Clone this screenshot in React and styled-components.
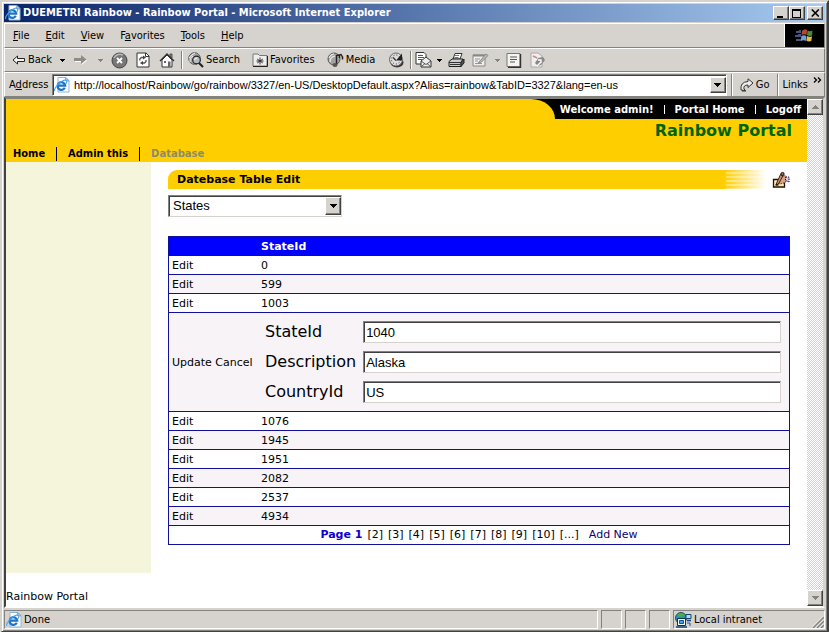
import React, { useState } from 'react';
import styled, { createGlobalStyle } from 'styled-components';

const uiFont = '"DejaVu Sans Condensed", "Liberation Sans", sans-serif';
const pageFont = '"DejaVu Sans", sans-serif';
const fieldFont = '"Liberation Sans", Arial, sans-serif';
const face = '#d6d3ce';
const shade = '#84827c';
const dark = '#424142';
const gold = '#ffce00';
const line = '#10109c';

const GlobalStyle = createGlobalStyle`
  *, *::before, *::after { box-sizing: border-box; }
  body { margin: 0; background: ${face}; }
  button, input, select { margin: 0; border-radius: 0; outline: none; }
`;

const Window = styled.div`
  display: flex;
  flex-direction: column;
  min-height: 100vh;
  padding: 2px;
  background: ${face};
  border: 2px solid;
  border-color: ${face} ${dark} ${dark} ${face};
  box-shadow: inset 1px 1px #fff, inset -1px -1px ${shade};
  color: #000;
  font: 11px/14px ${uiFont};
`;

const TitleBar = styled.header`
  display: flex;
  align-items: center;
  gap: 2px;
  height: 18px;
  padding: 0 2px 0 1px;
  background: linear-gradient(to right, #0a246a, #a6caf0);
  color: #fff;
`;

const WindowTitle = styled.h1`
  flex: 1;
  margin: 0;
  font: bold 11px/16px ${uiFont};
  white-space: nowrap;
`;

const CaptionButtons = styled.div`
  display: flex;
`;

const RaisedButton = styled.button`
  display: flex;
  align-items: center;
  justify-content: center;
  flex: none;
  width: 16px;
  height: ${(p) => (p.$tall ? 16 : 14)}px;
  margin-left: ${(p) => (p.$apart ? 2 : 0)}px;
  padding: 0;
  border: 1px solid;
  border-color: #fff ${dark} ${dark} #fff;
  box-shadow: inset -1px -1px ${shade};
  background: ${face};
`;

const Bar = styled.div`
  display: flex;
  align-items: center;
  height: ${(p) => p.$height}px;
  margin-top: ${(p) => (p.$first ? 1 : 0)}px;
  padding-left: ${(p) => p.$indent}px;
  border: 1px solid;
  border-color: #fff ${shade} ${shade} #fff;
`;

const MenuItem = styled.button`
  padding: 0 8px;
  border: 0;
  background: none;
  color: #000;
  font: 11px/18px ${uiFont};
`;

const Mnemonic = styled.span`
  text-decoration: underline;
`;

const Throbber = styled.div`
  display: flex;
  align-items: center;
  justify-content: center;
  width: 40px;
  height: 23px;
  margin-left: auto;
  border-left: 1px solid #fff;
  background: #000;
`;

const ToolGroup = styled.div`
  display: flex;
  align-items: center;
  gap: ${(p) => (p.$gap ? 6 : 0)}px;
`;

const ToolButton = styled.button`
  display: flex;
  align-items: center;
  justify-content: center;
  gap: 2px;
  height: 20px;
  min-width: ${(p) => (p.$labelled ? 0 : p.$tight ? 20 : 24)}px;
  padding: 0 ${(p) => (p.$labelled ? 3 : 0)}px;
  border: 0;
  background: none;
  color: #000;
  font: 11px/16px ${uiFont};
`;

const DropButton = styled(ToolButton)`
  min-width: ${(p) => (p.$tight ? 10 : 14)}px;
`;

const Separator = styled.span`
  width: 2px;
  height: ${(p) => (p.$full ? 22 : 18)}px;
  margin: 0 ${(p) => (p.$full ? 4 : 2)}px;
  border-left: 1px solid ${shade};
  border-right: 1px solid #fff;
`;

const AddressLabel = styled.label`
  width: 43px;
`;

const AddressBox = styled.div`
  display: flex;
  flex: 1;
  align-items: center;
  height: 22px;
  padding: 1px 0 1px 1px;
  border: 1px solid;
  border-color: ${shade} #fff #fff ${shade};
  box-shadow: inset 1px 1px ${dark};
  background: #fff;
`;

const AddressInput = styled.input`
  flex: 1;
  min-width: 0;
  padding: 0 4px;
  border: 0;
  background: none;
  color: #000;
  font: 11px/16px ${fieldFont};
`;

const BoxIcon = styled.span`
  display: flex;
`;

const Chevron = styled.button`
  align-self: flex-start;
  margin-left: 3px;
  padding: 4px 2px 0;
  border: 0;
  background: none;
  line-height: 0;
`;

const Viewport = styled.div`
  display: flex;
  flex: 1;
  border: 2px solid;
  border-color: ${shade} ${face} #fff ${dark};
  background: #fff;
`;

const Page = styled.div`
  flex: 1;
  min-width: 0;
  font: 11px/14px ${pageFont};
`;

const ScrollTrack = styled.div`
  display: flex;
  flex-direction: column;
  justify-content: space-between;
  width: 16px;
  background: repeating-conic-gradient(${face} 0 25%, #fff 0 50%) 0 0 / 2px 2px;
`;

const PortalHeader = styled.div`
  display: flex;
  flex-direction: column;
  background: ${gold};
`;

const UserBar = styled.nav`
  display: flex;
  align-items: center;
  align-self: flex-end;
  gap: 10px;
  height: 20px;
  padding: 1px 6px 0 0;
  background: #000;
  color: #fff;
  font: bold 10px/14px ${pageFont};
`;

const Curve = styled.span`
  width: 24px;
  height: 20px;
  margin: -1px -5px 0 0;
  border-top-right-radius: 24px 20px;
  background: ${gold};
`;

const Divider = styled.span`
  width: 1px;
  height: ${(p) => (p.$tall ? 14 : 9)}px;
  background: currentColor;
`;

const PlainLink = styled.a`
  color: inherit;
  text-decoration: none;
`;

const PortalName = styled.h2`
  margin: 0;
  padding: 2px 15px 0 0;
  color: #006500;
  font: bold 16px/20px ${pageFont};
  text-align: right;
`;

const Tabs = styled.nav`
  display: flex;
  align-items: center;
  gap: 11px;
  height: 21px;
  padding: 4px 7px 0;
  font: bold 11px/14px ${uiFont};
`;

const CurrentTab = styled.span`
  color: #8c8a6b;
  font: bold 10px/14px ${pageFont};
`;

const Columns = styled.div`
  display: flex;
`;

const LeftPane = styled.aside`
  flex: none;
  width: 145px;
  background: #f5f5dc;
`;

const Content = styled.main`
  flex: 1;
  min-width: 0;
  padding: 8px 17px 28px;
`;

const ModuleHead = styled.div`
  display: flex;
  align-items: center;
  gap: 6px;
`;

const ModuleTitle = styled.h3`
  flex: 1;
  margin: 0;
  padding: 2px 9px;
  border-top-left-radius: 9px;
  background:
    repeating-linear-gradient(to bottom, transparent 0 2px, rgba(255, 255, 255, 0.35) 2px 4px) right / 40px 100% no-repeat,
    linear-gradient(to right, ${gold} calc(100% - 42px), #fff);
  font: bold 11px/15px ${pageFont};
`;

const IconLink = styled.a`
  display: flex;
`;

const SelectBox = styled.div`
  position: relative;
  width: 174px;
  height: 22px;
  margin: 6px 0 19px;
  border: 1px solid;
  border-color: ${shade} ${face} ${face} ${shade};
  box-shadow: inset 1px 1px ${dark};
`;

const TableSelect = styled.select`
  appearance: none;
  width: 100%;
  height: 20px;
  padding: 0 20px 0 4px;
  border: 0;
  background: none;
  color: #000;
  font: 13px/18px ${fieldFont};
`;

const SelectArrow = styled.span`
  position: absolute;
  top: 1px;
  right: 0;
  display: flex;
  align-items: center;
  justify-content: center;
  width: 16px;
  height: 18px;
  border: 1px solid;
  border-color: #fff ${dark} ${dark} #fff;
  box-shadow: inset -1px -1px ${shade};
  background: ${face};
  pointer-events: none;
`;

const Grid = styled.table`
  width: 100%;
  border: 1px solid ${line};
  border-spacing: 0;
  table-layout: fixed;
`;

const HeadCell = styled.th`
  width: ${(p) => (p.$narrow ? '89px' : 'auto')};
  height: 19px;
  padding: 0 3px;
  background: #00f;
  color: #fff;
  font: bold 11px/14px ${pageFont};
  text-align: left;
`;

const Row = styled.tr`
  background: ${(p) => (p.$shaded ? '#f7f3f7' : '#fff')};
`;

const Cell = styled.td`
  height: 19px;
  padding: 1px 3px 0;
  border-bottom: 1px solid ${line};
  white-space: nowrap;
`;

const FormCell = styled(Cell)`
  padding: 8px 8px 8px 7px;
`;

const Fields = styled.div`
  display: grid;
  grid-template-columns: auto 1fr;
  gap: 8px 7px;
`;

const FieldLabel = styled.label`
  font: 16px/22px ${pageFont};
`;

const FieldInput = styled.input`
  min-width: 0;
  height: 22px;
  padding: 0 2px;
  border: 1px solid;
  border-color: ${shade} ${face} ${face} ${shade};
  box-shadow: inset 1px 1px ${dark};
  background: #fff;
  color: #000;
  font: 13px/18px ${fieldFont};
`;

const PagerCell = styled.td`
  height: 18px;
  padding: 0;
`;

const Pager = styled.div`
  display: flex;
  justify-content: center;
  gap: 5px;
`;

const CurrentPage = styled.b`
  color: #1000ce;
`;

const AddLink = styled.a`
  margin-left: 5px;
  color: #10006b;
  text-decoration: none;
`;

const PortalFooter = styled.footer`
  padding: 17px 0 2px;
`;

const StatusBar = styled.footer`
  display: flex;
  gap: 3px;
  height: 21px;
  padding-top: 2px;
`;

const StatusPanel = styled.div`
  display: flex;
  align-items: center;
  gap: 2px;
  flex: ${(p) => (p.$grow ? '1' : 'none')};
  width: ${(p) => p.$width || 21}px;
  padding-left: 1px;
  border: 1px solid;
  border-color: ${shade} #fff #fff ${shade};
`;

const Grip = styled.span`
  align-self: flex-end;
  display: flex;
  margin-left: auto;
`;

const BrowserIcon = () => (
  <svg width="16" height="16" viewBox="0 0 16 16" aria-hidden="true">
    <path d="M4 .5h8l3 3v11.500H4z" fill="#fff" stroke="#8eb4dc" />
    <path d="M11.500.5v3.500H15z" fill="#b8d0ea" stroke="#6b8cbc" strokeWidth=".6" />
    <path d="M10.800 10.800A3.800 3.800 0 1 1 11.200 8.600H4.500" fill="none" stroke="#1e72c8" strokeWidth="2.200" />
    <path d="M1 14C-1 12 6 4 11 3c3-.4 1.700 3 .7 4" fill="none" stroke="#49a7e8" strokeWidth="1.100" />
  </svg>
);

const FlagIcon = () => (
  <svg width="20" height="18" viewBox="0 0 20 18" aria-hidden="true">
    <path d="M1 4h3v2H1zM0 8h4v2H0zM1 12h3v2H1zM4 3h2v3H4zM3 7h3v3H3zM4 12h2v2H4z" fill="#47567a" />
    <path d="M7 4q3-3 5-1l-.5 5q-2-1.500-5 0z" fill="#bb4a2b" />
    <path d="M12.500 3.500q2 1.500 5 0L17 8.500q-3 1-5-.5z" fill="#458c3d" />
    <path d="M6.300 9q3-1.500 5 0l-.5 5q-2-1.500-5 0z" fill="#6e9fe0" />
    <path d="M12 9q2 1.500 5 .3l-.7 4.700q-3 1-5-.5z" fill="#dfc140" />
  </svg>
);

const Caret = ({ color = '#000' }) => (
  <svg width="7" height="4" viewBox="0 0 7 4" shapeRendering="crispEdges" aria-hidden="true">
    <path d="M0 0h7v1H0zM1 1h5v1H1zM2 2h3v1H2zM3 3h1v1H3z" fill={color} />
  </svg>
);

const SmallCaret = ({ color = '#000' }) => (
  <svg width="5" height="3" viewBox="0 0 5 3" shapeRendering="crispEdges" aria-hidden="true">
    <path d="M0 0h5v1H0zM1 1h3v1H1zM2 2h1v1H2z" fill={color} />
  </svg>
);

const UpArrow = () => (
  <svg width="7" height="4" viewBox="0 0 7 4" shapeRendering="crispEdges" aria-hidden="true">
    <path d="M3 0h1v1H3zM2 1h3v1H2zM1 2h5v1H1zM0 3h7v1H0z" fill={shade} />
  </svg>
);

const MinimizeIcon = () => (
  <svg width="10" height="9" viewBox="0 0 10 9" shapeRendering="crispEdges" aria-hidden="true">
    <path d="M1 7h6v2H1z" />
  </svg>
);

const MaximizeIcon = () => (
  <svg width="10" height="9" viewBox="0 0 10 9" shapeRendering="crispEdges" aria-hidden="true">
    <path d="M0 0h9v9H0zM1 2v6h7V2z" fillRule="evenodd" />
  </svg>
);

const CloseIcon = () => (
  <svg width="9" height="8" viewBox="0 0 9 8" aria-hidden="true">
    <path d="M.8.5l7 7M7.800.5l-7 7" stroke="#000" strokeWidth="1.600" />
  </svg>
);

const BackIcon = () => (
  <svg width="14" height="12" viewBox="0 0 14 12" aria-hidden="true">
    <path d="M1 6l4.500-4v2.500h7v3h-7V10z" fill="#f4f4f0" stroke="#222" />
  </svg>
);

const ForwardIcon = () => (
  <svg width="14" height="12" viewBox="0 0 14 12" aria-hidden="true">
    <path d="M1 5h6.500V2L13 6.500 7.500 11V8H1z" fill="#fff" />
    <path d="M0 4h7V1l5.500 4.500L7 10V7H0z" fill="#8d8b87" />
  </svg>
);

const StopIcon = () => (
  <svg width="17" height="17" viewBox="0 0 17 17" aria-hidden="true">
    <circle cx="8.500" cy="8.500" r="7.500" fill="#777" stroke="#444" />
    <path d="M3 6a6.500 6.500 0 0 1 9-3" fill="none" stroke="#bbb" strokeWidth="1.500" />
    <path d="M6 6l5 5M11 6l-5 5" stroke="#fff" strokeWidth="1.800" />
  </svg>
);

const RefreshIcon = () => (
  <svg width="14" height="16" viewBox="0 0 14 16" aria-hidden="true">
    <path d="M1 1h9l3 3v11H1z" fill="#fff" stroke="#333" />
    <path d="M9.500 1v3.500H13" fill="none" stroke="#333" />
    <path d="M3.800 8.500V7l1.500-1.500H8M10 8v1.500L8.500 11H6" fill="none" stroke="#555" strokeWidth="1.300" />
    <path d="M7 3.500l3 2-3 2zM7 9l-3 2 3 2z" fill="#444" />
  </svg>
);

const HomeIcon = () => (
  <svg width="16" height="16" viewBox="0 0 16 16" aria-hidden="true">
    <path d="M11 2h2v4h-2z" fill="#999" stroke="#333" strokeWidth=".8" />
    <path d="M3 8v7h10V8L8 3z" fill="#fff" stroke="#333" />
    <path d="M1 9l7-7 7 7" fill="none" stroke="#333" strokeWidth="1.400" />
    <path d="M9 9.500h2.500V15H9zM5 9h2v2H5z" fill="#666" />
  </svg>
);

const SearchIcon = () => (
  <svg width="16" height="16" viewBox="0 0 16 16" aria-hidden="true">
    <circle cx="6.500" cy="6.500" r="5.800" fill="#aaa" stroke="#555" />
    <path d="M1 6q3-4 6-5M2 10q-1-4 3-6" fill="none" stroke="#eee" />
    <circle cx="8.500" cy="8" r="3.800" fill="#b5bcc0" stroke="#222" strokeWidth="1.200" />
    <path d="M6.500 8q.5-2 2.500-2" fill="none" stroke="#fff" />
    <path d="M11 11l4 4" stroke="#222" strokeWidth="2.200" />
  </svg>
);

const FavoritesIcon = () => (
  <svg width="16" height="14" viewBox="0 0 16 14" aria-hidden="true">
    <path d="M1 2.500V1h5l1.500 1.500H15V13H1z" fill="#eee" stroke="#777" />
    <path d="M15.500 3v10.500H1" fill="none" stroke="#222" />
    <path d="M8 4.500v7M5.200 6l5.600 4M10.800 6L5.200 10M4.500 8h7" stroke="#333" />
  </svg>
);

const MediaIcon = () => (
  <svg width="17" height="16" viewBox="0 0 17 16" aria-hidden="true">
    <circle cx="7" cy="7" r="6" fill="#a3a3a0" stroke="#555" />
    <path d="M2 6q2-4 5-4M3 10q0-5 5-6" fill="none" stroke="#eee" strokeWidth="1.200" />
    <path d="M9.500 13V3.500L14 2.500q2 2 1.500 5M12.500 3v3" fill="none" stroke="#222" strokeWidth="1.400" />
    <ellipse cx="8" cy="13" rx="2.500" ry="2" fill="#555" />
  </svg>
);

const HistoryIcon = () => (
  <svg width="17" height="16" viewBox="0 0 17 16" aria-hidden="true">
    <ellipse cx="9" cy="10.500" rx="6.500" ry="5" fill="#333" />
    <circle cx="8" cy="7.500" r="6.500" fill="#ddd" stroke="#666" />
    <circle cx="8" cy="7.500" r="4.500" fill="none" stroke="#333" strokeDasharray="1 2" />
    <path d="M8 8.500l6-7v7z" fill="#222" />
    <path d="M5 5.500l3 3" stroke="#333" strokeWidth="1.300" />
  </svg>
);

const MailIcon = () => (
  <svg width="18" height="16" viewBox="0 0 18 16" aria-hidden="true">
    <path d="M1 .5h8l2 2V12H1z" fill="#fff" stroke="#333" />
    <path d="M3 3.500h5M3 5.500h6M3 7.500h4" stroke="#555" />
    <path d="M6 9l5-4 5 4v6H6z" fill="#eee" stroke="#333" />
    <path d="M6 9l5 3.500L16 9M6 15l4-3.500M16 15l-4-3.500" fill="none" stroke="#555" />
  </svg>
);

const PrintIcon = () => (
  <svg width="17" height="15" viewBox="0 0 17 15" aria-hidden="true">
    <path d="M5 6l2-5.500h7L12 6z" fill="#fff" stroke="#333" />
    <path d="M7 2.500h4M6.500 4.500h4" stroke="#777" />
    <path d="M1 8.500L4 6h11l-2 3v4.500H1z" fill="#ccc" stroke="#222" />
    <path d="M13 9.500L16 6v4l-3 3.500z" fill="#555" stroke="#222" />
    <path d="M1 9.500h12M2 11.500h10" stroke="#333" />
  </svg>
);

const EditPageIcon = () => (
  <svg width="17" height="14" viewBox="0 0 17 14" aria-hidden="true">
    <path d="M1 2h12v11H1z" fill="#eee" stroke="#8a8884" />
    <path d="M1 2.500h12" stroke="#8a8884" strokeWidth="2" />
    <path d="M3 6h5M3 8h3M3 10.500h7" stroke="#999" />
    <path d="M7 9l7-8 2 1.500-7 7L6 10.500z" fill="#bbb" stroke="#8a8884" />
  </svg>
);

const DiscussIcon = () => (
  <svg width="16" height="15" viewBox="0 0 16 15" aria-hidden="true">
    <path d="M1 .5h13v13H1z" fill="#f4f4f0" stroke="#777" />
    <path d="M14.500 1v13.500H2" fill="none" stroke="#333" strokeWidth="1.400" />
    <path d="M4 4h7M4 6.500h7M4 9h5" stroke="#555" />
  </svg>
);

const ResearchIcon = () => (
  <svg width="16" height="16" viewBox="0 0 16 16" aria-hidden="true">
    <path d="M1 1h7l4 3v11H1z" fill="#eee" stroke="#aaa" />
    <path d="M5 11l3-5 5-1 2 3-4 5-3 1z" fill="#888" />
    <path d="M4 5l3 3M8 8h3v3M11 10l-4 4" stroke="#fff" strokeWidth="1.400" fill="none" />
    <path d="M3 4l4 2" stroke="#c88" strokeWidth="1.500" />
  </svg>
);

const GoIcon = () => (
  <svg width="14" height="14" viewBox="0 0 14 14" aria-hidden="true">
    <path d="M1 12q-1-8 7-8.500V.8L13 5 8 9.500V7Q3 7 4 11l1.500 1.500z" fill="#eee" stroke="#333" />
    <path d="M2 13h4" stroke="#333" />
  </svg>
);

const MoreIcon = () => (
  <svg width="9" height="6" viewBox="0 0 9 6" aria-hidden="true">
    <path d="M1 .5L3.500 3 1 5.500M5 .5L7.500 3 5 5.500" fill="none" stroke="#000" strokeWidth="1.300" />
  </svg>
);

const PencilIcon = () => (
  <svg width="18" height="18" viewBox="0 0 18 18" aria-hidden="true">
    <path d="M1.500 8.500h11v7.500h-11z" fill="#ffefad" stroke="#211000" strokeWidth="1.300" />
    <path d="M8 7l5-2.500 2 2v3L12 12l-4 1-2-1z" fill="#d9a184" stroke="#633020" strokeDasharray="1.500 1" />
    <path d="M13.500 6h3.500v5l-3.500-1.500z" fill="#d6c5ef" stroke="#211021" strokeDasharray="1.500 1" />
    <path d="M4 13.500L8.500 3.500l2.500 1L6.500 13z" fill="#c98f70" stroke="#422018" />
    <circle cx="10.500" cy="3" r="1.600" fill="#8c7468" stroke="#211000" />
    <path d="M3.500 14h3" stroke="#000" strokeWidth="1.200" />
  </svg>
);

const IntranetIcon = () => (
  <svg width="17" height="16" viewBox="0 0 17 16" aria-hidden="true">
    <circle cx="6" cy="6" r="5.500" fill="#2c94b0" stroke="#1c5068" />
    <path d="M2 3q4-4 8 0l-3 2z" fill="#4caf3d" />
    <path d="M2.500 6.500h8v7h-8z" fill="#f0f8ff" stroke="#10314a" />
    <path d="M4.500 8.500h4v3h-4z" fill="#3da5e8" stroke="#1850a0" />
    <path d="M11 2.500h5v4h-5z" fill="#a9dcff" stroke="#18426b" />
    <path d="M12 8.500h4M1 15h11" stroke="#18426b" strokeWidth="1.500" />
    <path d="M12 11h3v3" fill="none" stroke="#1850d0" />
  </svg>
);

const GripIcon = () => (
  <svg width="12" height="12" viewBox="0 0 12 12" aria-hidden="true">
    <path d="M0 11.500L11.500 0M4 11.500L11.500 4M8 11.500L11.500 8" stroke="#fff" />
    <path d="M1 12L12 1M5 12l7-7M9 12l3-3" stroke={shade} strokeWidth="1.500" />
  </svg>
);

const rowsBefore = ['0', '599', '1003'];
const rowsAfter = ['1076', '1945', '1951', '2082', '2537', '4934'];
const pages = ['[2]', '[3]', '[4]', '[5]', '[6]', '[7]', '[8]', '[9]', '[10]', '[...]'];
const record = [
  ['StateId', '1040'],
  ['Description', 'Alaska'],
  ['CountryId', 'US'],
];

const DataRow = ({ id, shaded }) => (
  <Row $shaded={shaded}>
    <Cell><PlainLink href="#edit">Edit</PlainLink></Cell>
    <Cell>{id}</Cell>
  </Row>
);

const BrowserChrome = () => {
  const [url, setUrl] = useState(
    'http://localhost/Rainbow/go/rainbow/3327/en-US/DesktopDefault.aspx?Alias=rainbow&TabID=3327&lang=en-us'
  );
  return (
    <>
      <TitleBar>
        <BrowserIcon />
        <WindowTitle>DUEMETRI Rainbow - Rainbow Portal - Microsoft Internet Explorer</WindowTitle>
        <CaptionButtons>
          <RaisedButton aria-label="Minimize"><MinimizeIcon /></RaisedButton>
          <RaisedButton aria-label="Maximize"><MaximizeIcon /></RaisedButton>
          <RaisedButton $apart aria-label="Close"><CloseIcon /></RaisedButton>
        </CaptionButtons>
      </TitleBar>
      <Bar $first $height={25} $indent={0}>
        {['File', 'Edit', 'View'].map((m) => <MenuItem key={m}><Mnemonic>{m[0]}</Mnemonic>{m.slice(1)}</MenuItem>)}
        <MenuItem>F<Mnemonic>a</Mnemonic>vorites</MenuItem>
        {['Tools', 'Help'].map((m) => <MenuItem key={m}><Mnemonic>{m[0]}</Mnemonic>{m.slice(1)}</MenuItem>)}
        <Throbber><FlagIcon /></Throbber>
      </Bar>
      <Bar $height={24} $indent={4}>
        <ToolGroup>
          <ToolButton $labelled><BackIcon />Back</ToolButton>
          <DropButton aria-label="Back history"><SmallCaret /></DropButton>
          <ToolButton aria-label="Forward"><ForwardIcon /></ToolButton>
          <DropButton aria-label="Forward history"><SmallCaret color={shade} /></DropButton>
          <ToolButton aria-label="Stop"><StopIcon /></ToolButton>
          <ToolButton aria-label="Refresh"><RefreshIcon /></ToolButton>
          <ToolButton aria-label="Home"><HomeIcon /></ToolButton>
        </ToolGroup>
        <Separator />
        <ToolGroup $gap>
          <ToolButton $labelled><SearchIcon />Search</ToolButton>
          <ToolButton $labelled><FavoritesIcon />Favorites</ToolButton>
          <ToolButton $labelled><MediaIcon />Media</ToolButton>
          <ToolButton aria-label="History"><HistoryIcon /></ToolButton>
        </ToolGroup>
        <Separator />
        <ToolGroup>
          <ToolButton $tight aria-label="Mail"><MailIcon /></ToolButton>
          <DropButton $tight aria-label="Mail options"><SmallCaret /></DropButton>
          <ToolButton aria-label="Print"><PrintIcon /></ToolButton>
          <ToolButton aria-label="Edit page"><EditPageIcon /></ToolButton>
          <DropButton $tight aria-label="Edit options"><SmallCaret color={shade} /></DropButton>
          <ToolButton aria-label="Discuss"><DiscussIcon /></ToolButton>
          <ToolButton aria-label="Research"><ResearchIcon /></ToolButton>
        </ToolGroup>
      </Bar>
      <Bar $height={25} $indent={4}>
        <AddressLabel htmlFor="address">A<Mnemonic>d</Mnemonic>dress</AddressLabel>
        <AddressBox>
          <BoxIcon><BrowserIcon /></BoxIcon>
          <AddressInput id="address" value={url} onChange={(e) => setUrl(e.target.value)} />
          <RaisedButton $tall aria-label="Address history"><Caret /></RaisedButton>
        </AddressBox>
        <Separator $full />
        <ToolButton $labelled><GoIcon />Go</ToolButton>
        <Separator $full />
        Links
        <Chevron aria-label="More links"><MoreIcon /></Chevron>
      </Bar>
    </>
  );
};

const StateTable = () => (
  <Grid>
    <thead>
      <tr>
        <HeadCell $narrow />
        <HeadCell>StateId</HeadCell>
      </tr>
    </thead>
    <tbody>
      {rowsBefore.map((id, i) => <DataRow key={id} id={id} shaded={i % 2 === 1} />)}
      <Row $shaded>
        <Cell>
          <PlainLink href="#update">Update</PlainLink> <PlainLink href="#cancel">Cancel</PlainLink>
        </Cell>
        <FormCell>
          <Fields>
            {record.map(([name, value]) => (
              <React.Fragment key={name}>
                <FieldLabel htmlFor={name}>{name}</FieldLabel>
                <FieldInput id={name} defaultValue={value} />
              </React.Fragment>
            ))}
          </Fields>
        </FormCell>
      </Row>
      {rowsAfter.map((id, i) => <DataRow key={id} id={id} shaded={i % 2 === 1} />)}
    </tbody>
    <tfoot>
      <tr>
        <PagerCell colSpan={2}>
          <Pager>
            <CurrentPage>Page 1</CurrentPage>
            {pages.map((p) => <PlainLink key={p} href="#page">{p}</PlainLink>)}
            <AddLink href="#new">Add New</AddLink>
          </Pager>
        </PagerCell>
      </tr>
    </tfoot>
  </Grid>
);

const PortalPage = () => (
  <Page>
    <PortalHeader>
      <UserBar>
        <Curve />
        <span>Welcome admin!</span>
        <Divider />
        <PlainLink href="#home">Portal Home</PlainLink>
        <Divider />
        <PlainLink href="#logoff">Logoff</PlainLink>
      </UserBar>
      <PortalName>Rainbow Portal</PortalName>
      <Tabs>
        <PlainLink href="#home">Home</PlainLink>
        <Divider $tall />
        <PlainLink href="#admin">Admin this</PlainLink>
        <Divider $tall />
        <CurrentTab>Database</CurrentTab>
      </Tabs>
    </PortalHeader>
    <Columns>
      <LeftPane />
      <Content>
        <ModuleHead>
          <ModuleTitle>Datebase Table Edit</ModuleTitle>
          <IconLink href="#edit-module" aria-label="Edit module"><PencilIcon /></IconLink>
        </ModuleHead>
        <SelectBox>
          <TableSelect aria-label="Table" defaultValue="States">
            <option>States</option>
          </TableSelect>
          <SelectArrow><Caret /></SelectArrow>
        </SelectBox>
        <StateTable />
      </Content>
    </Columns>
    <PortalFooter>Rainbow Portal</PortalFooter>
  </Page>
);

export default function App() {
  return (
    <Window>
      <GlobalStyle />
      <BrowserChrome />
      <Viewport>
        <PortalPage />
        <ScrollTrack>
          <RaisedButton $tall aria-label="Scroll up"><UpArrow /></RaisedButton>
          <RaisedButton $tall aria-label="Scroll down"><Caret color={shade} /></RaisedButton>
        </ScrollTrack>
      </Viewport>
      <StatusBar>
        <StatusPanel $grow><BrowserIcon />Done</StatusPanel>
        <StatusPanel />
        <StatusPanel />
        <StatusPanel />
        <StatusPanel $width={152}>
          <IntranetIcon />Local intranet
          <Grip><GripIcon /></Grip>
        </StatusPanel>
      </StatusBar>
    </Window>
  );
}
